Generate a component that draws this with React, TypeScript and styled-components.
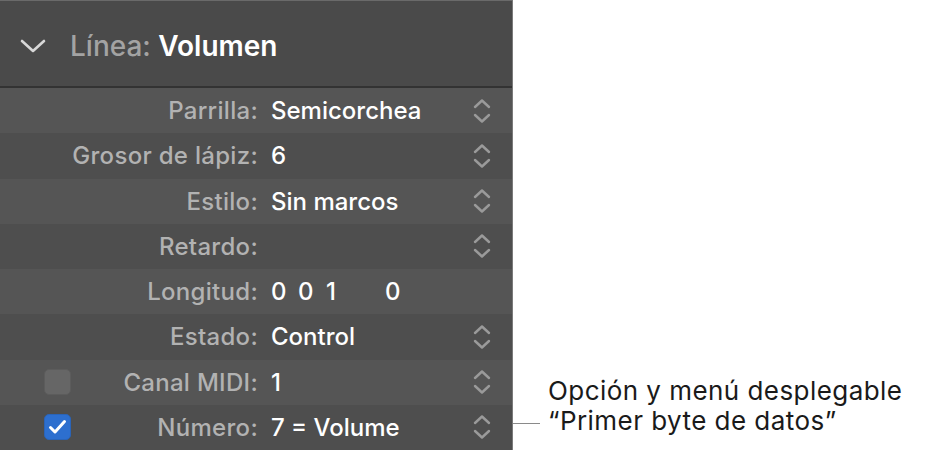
import React from "react";
import styled, { createGlobalStyle } from "styled-components";

const GlobalStyle = createGlobalStyle`
  html, body {
    margin: 0;
    padding: 0;
    background: #ffffff;
  }
  body {
    font-family: "Inter", "Liberation Sans", sans-serif;
    -webkit-font-smoothing: antialiased;
  }
`;

const Page = styled.div`
  display: flex;
  width: 926px;
  height: 450px;
  overflow: hidden;
`;

const Panel = styled.div`
  width: 512px;
  height: 450px;
  display: flex;
  flex-direction: column;
  border-right: 1px solid #7a7a7a;
  background: #4f4f4f;
`;

const Header = styled.div`
  height: 88px;
  box-sizing: border-box;
  border-top: 1px solid #6a6a6a;
  border-bottom: 2px solid #333333;
  background: #4a4a4a;
  display: flex;
  align-items: center;
  padding: 4px 0 0 20px;
  gap: 24px;
  font-size: 28px;
`;

const HeaderLabel = styled.span`
  color: #a3a3a3;
  font-weight: 500;
`;

const HeaderValue = styled.span`
  color: #ffffff;
  font-weight: 600;
`;

const Rows = styled.div`
  display: flex;
  flex-direction: column;
`;

const Row = styled.div<{ $odd: boolean }>`
  height: 45.25px;
  display: grid;
  grid-template-columns: 100px 158px 1fr 40px;
  align-items: center;
  background: ${p => (p.$odd ? "#555555" : "#4e4e4e")};
  font-size: 24px;
`;

const CheckCell = styled.div`
  grid-column: 1;
  grid-row: 1;
  padding-left: 44px;
  display: flex;
  align-items: center;
`;

const Checkbox = styled.div<{ $checked: boolean }>`
  width: 27px;
  height: 26px;
  box-sizing: border-box;
  border-radius: 5px;
  display: flex;
  align-items: center;
  justify-content: center;
  background: ${p => (p.$checked ? "#2d6fcf" : "#666666")};
  border: 1px solid ${p => (p.$checked ? "#2a64b8" : "#5c5c5c")};
`;

const Label = styled.div`
  grid-column: 1 / 3;
  grid-row: 1;
  justify-self: end;
  color: #b2b2b2;
  font-weight: 500;
  letter-spacing: 0.3px;
  white-space: nowrap;
`;

const Value = styled.div`
  grid-column: 3;
  grid-row: 1;
  padding-left: 13px;
  color: #ffffff;
  font-weight: 500;
  white-space: nowrap;
  display: flex;
`;

const Digit = styled.span<{ $w: number }>`
  display: inline-block;
  width: ${p => p.$w}px;
`;

const Stepper = styled.div`
  grid-column: 4;
  grid-row: 1;
  display: flex;
  align-items: center;
`;

const Annotation = styled.div`
  flex: 1;
  display: flex;
  flex-direction: column;
  padding-top: 376px;
`;

const Callout = styled.div`
  display: flex;
  align-items: flex-end;
`;

const Leader = styled.div`
  width: 27px;
  height: 1px;
  background: #8a8a8a;
  margin-bottom: 12px;
  margin-right: 8px;
`;

const CalloutText = styled.div`
  color: #1a1a1a;
  font-size: 26px;
  line-height: 30px;
  letter-spacing: 0.45px;
`;

const UpDown = () => (
  <svg width="20" height="28" viewBox="0 0 20 28" fill="none">
    <path d="M3 10 L10 3.5 L17 10" stroke="#9a9a9a" strokeWidth="2.4" strokeLinecap="round" strokeLinejoin="round" />
    <path d="M3 18 L10 24.5 L17 18" stroke="#9a9a9a" strokeWidth="2.4" strokeLinecap="round" strokeLinejoin="round" />
  </svg>
);

const Chevron = () => (
  <svg width="26" height="16" viewBox="0 0 26 16" fill="none">
    <path d="M2 3 L13 13 L24 3" stroke="#d8d8d8" strokeWidth="2.6" strokeLinecap="round" strokeLinejoin="round" />
  </svg>
);

const Tick = () => (
  <svg width="19" height="16" viewBox="0 0 19 16" fill="none">
    <path d="M2.5 8.5 L7 13 L16.5 2.5" stroke="#ffffff" strokeWidth="3" strokeLinecap="round" strokeLinejoin="round" />
  </svg>
);

type Item = {
  label: string;
  value?: React.ReactNode;
  stepper?: boolean;
  check?: boolean;
};

const items: Item[] = [
  { label: "Parrilla:", value: "Semicorchea", stepper: true },
  { label: "Grosor de lápiz:", value: "6", stepper: true },
  { label: "Estilo:", value: "Sin marcos", stepper: true },
  { label: "Retardo:", stepper: true },
  {
    label: "Longitud:",
    value: (
      <>
        <Digit $w={27}>0</Digit>
        <Digit $w={28}>0</Digit>
        <Digit $w={59}>1</Digit>
        <Digit $w={20}>0</Digit>
      </>
    ),
  },
  { label: "Estado:", value: "Control", stepper: true },
  { label: "Canal MIDI:", value: "1", stepper: true, check: false },
  { label: "Número:", value: "7 = Volume", stepper: true, check: true },
];

const App: React.FC = () => {
  return (
    <>
      <GlobalStyle />
      <Page>
        <Panel>
          <Header>
            <Chevron />
            <span>
              <HeaderLabel>Línea: </HeaderLabel>
              <HeaderValue>Volumen</HeaderValue>
            </span>
          </Header>
          <Rows>
            {items.map((it, i) => (
              <Row key={it.label} $odd={i % 2 === 0}>
                {it.check !== undefined && (
                  <CheckCell>
                    <Checkbox $checked={it.check}>{it.check && <Tick />}</Checkbox>
                  </CheckCell>
                )}
                <Label>{it.label}</Label>
                <Value>{it.value}</Value>
                <Stepper>{it.stepper && <UpDown />}</Stepper>
              </Row>
            ))}
          </Rows>
        </Panel>
        <Annotation>
          <Callout>
            <Leader />
            <CalloutText>
              Opción y menú desplegable
              <br />
              “Primer byte de datos”
            </CalloutText>
          </Callout>
        </Annotation>
      </Page>
    </>
  );
};

export default App;
